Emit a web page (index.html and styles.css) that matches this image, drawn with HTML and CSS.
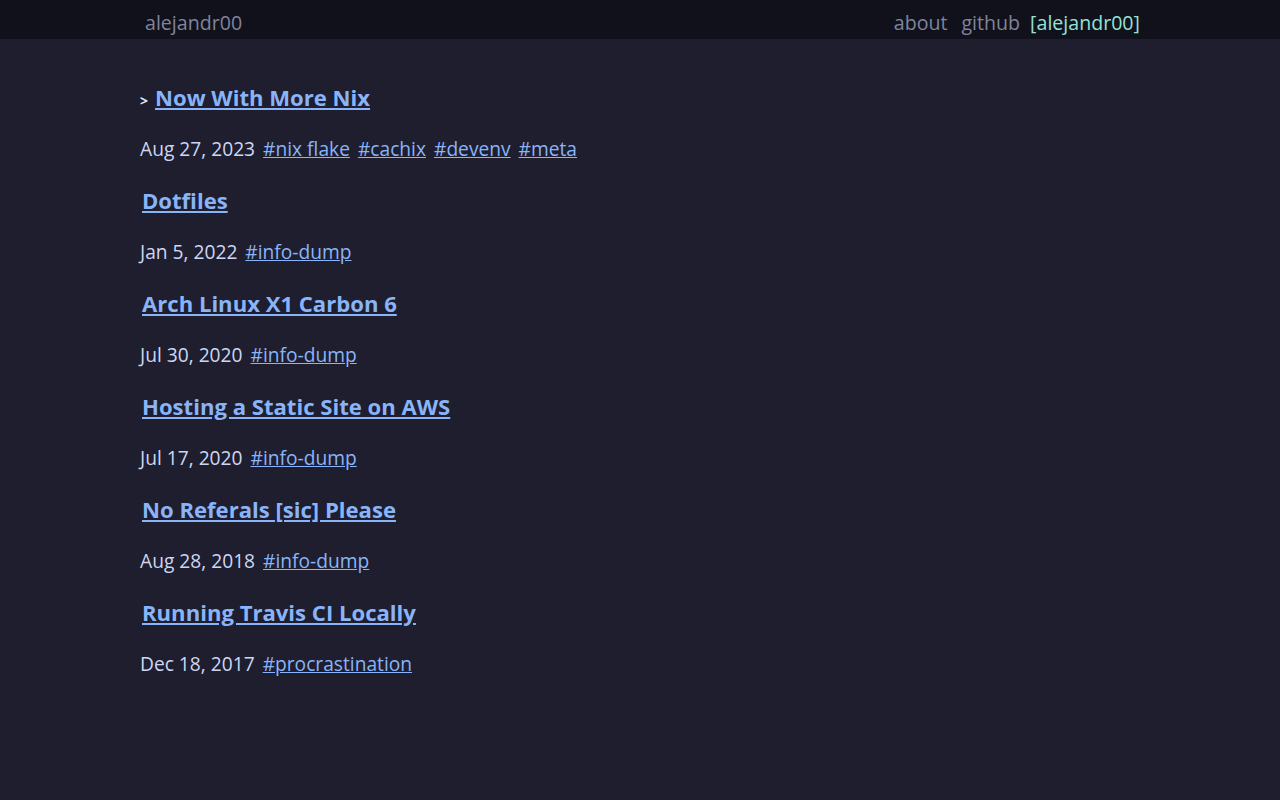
FILE: index.html
```html
<!DOCTYPE html>
<html lang="en">
<head>
    <meta charset="UTF-8">
    <meta name="viewport" content="width=device-width, initial-scale=1.0">
    <title>alejandr00</title>
    <link rel="stylesheet" href="styles.css">
</head>
<body>
    <header class="site-header">
        <nav class="nav">
            <a class="nav-home" href="#">alejandr00</a>
            <div class="nav-links">
                <a href="#">about</a>
                <a href="#">github</a>
                <a class="nav-current" href="#">[alejandr00]</a>
            </div>
        </nav>
    </header>

    <main class="container">
        <ul class="posts">
            <li class="post current">
                <h2 class="post-title"><span class="marker">&gt;</span><a href="#">Now With More Nix</a></h2>
                <p class="post-meta">Aug 27, 2023 <a href="#">#nix flake</a> <a href="#">#cachix</a> <a href="#">#devenv</a> <a href="#">#meta</a></p>
            </li>
            <li class="post">
                <h2 class="post-title"><a href="#">Dotfiles</a></h2>
                <p class="post-meta">Jan 5, 2022 <a href="#">#info-dump</a></p>
            </li>
            <li class="post">
                <h2 class="post-title"><a href="#">Arch Linux X1 Carbon 6</a></h2>
                <p class="post-meta">Jul 30, 2020 <a href="#">#info-dump</a></p>
            </li>
            <li class="post">
                <h2 class="post-title"><a href="#">Hosting a Static Site on AWS</a></h2>
                <p class="post-meta">Jul 17, 2020 <a href="#">#info-dump</a></p>
            </li>
            <li class="post">
                <h2 class="post-title"><a href="#">No Referals [sic] Please</a></h2>
                <p class="post-meta">Aug 28, 2018 <a href="#">#info-dump</a></p>
            </li>
            <li class="post">
                <h2 class="post-title"><a href="#">Running Travis CI Locally</a></h2>
                <p class="post-meta">Dec 18, 2017 <a href="#">#procrastination</a></p>
            </li>
        </ul>
    </main>
</body>
</html>
```

FILE: styles.css
```css
body {
    margin: 0;
    background-color: #1e1e2e;
    color: #cdd6f4;
    font-family: "Open Sans", sans-serif;
}
a {
    color: #89b4fa;
}
.site-header {
    background-color: #11111b;
    height: 39px;
}
.nav {
    width: 1000px;
    margin: 0 auto;
    display: flex;
    justify-content: space-between;
    align-items: center;
    height: 100%;
    font-size: 19.6px;
    line-height: 39px;
    padding-top: 5px;
    box-sizing: border-box;
}
.nav a {
    color: #7f849c;
    text-decoration: none;
}
.nav-home {
    margin-left: 5px;
}
.nav-links {
    display: flex;
    gap: 10px;
}
.nav-links a + a {
    margin-left: 4px;
}
.nav-links .nav-current {
    color: #94e2d5;
    margin-left: 0;
}
.container {
    width: 1000px;
    margin: 0 auto;
    padding-top: 44px;
}
.posts {
    list-style: none;
    margin: 0;
    padding: 0;
}
.post {
    margin-bottom: 22px;
}
.post-title {
    margin: 0 0 22px;
    font-size: 22.1px;
    line-height: 29px;
    font-weight: 700;
    padding-left: 2px;
}
.post.current .post-title {
    padding-left: 0;
}
.marker {
    font-size: 14px;
    line-height: 1;
    color: #e6e9f5;
    margin-right: 7px;
}
.post-meta {
    margin: 0;
    font-size: 19.2px;
    line-height: 30px;
}
.post-meta a {
    margin-left: 3px;
}
```
